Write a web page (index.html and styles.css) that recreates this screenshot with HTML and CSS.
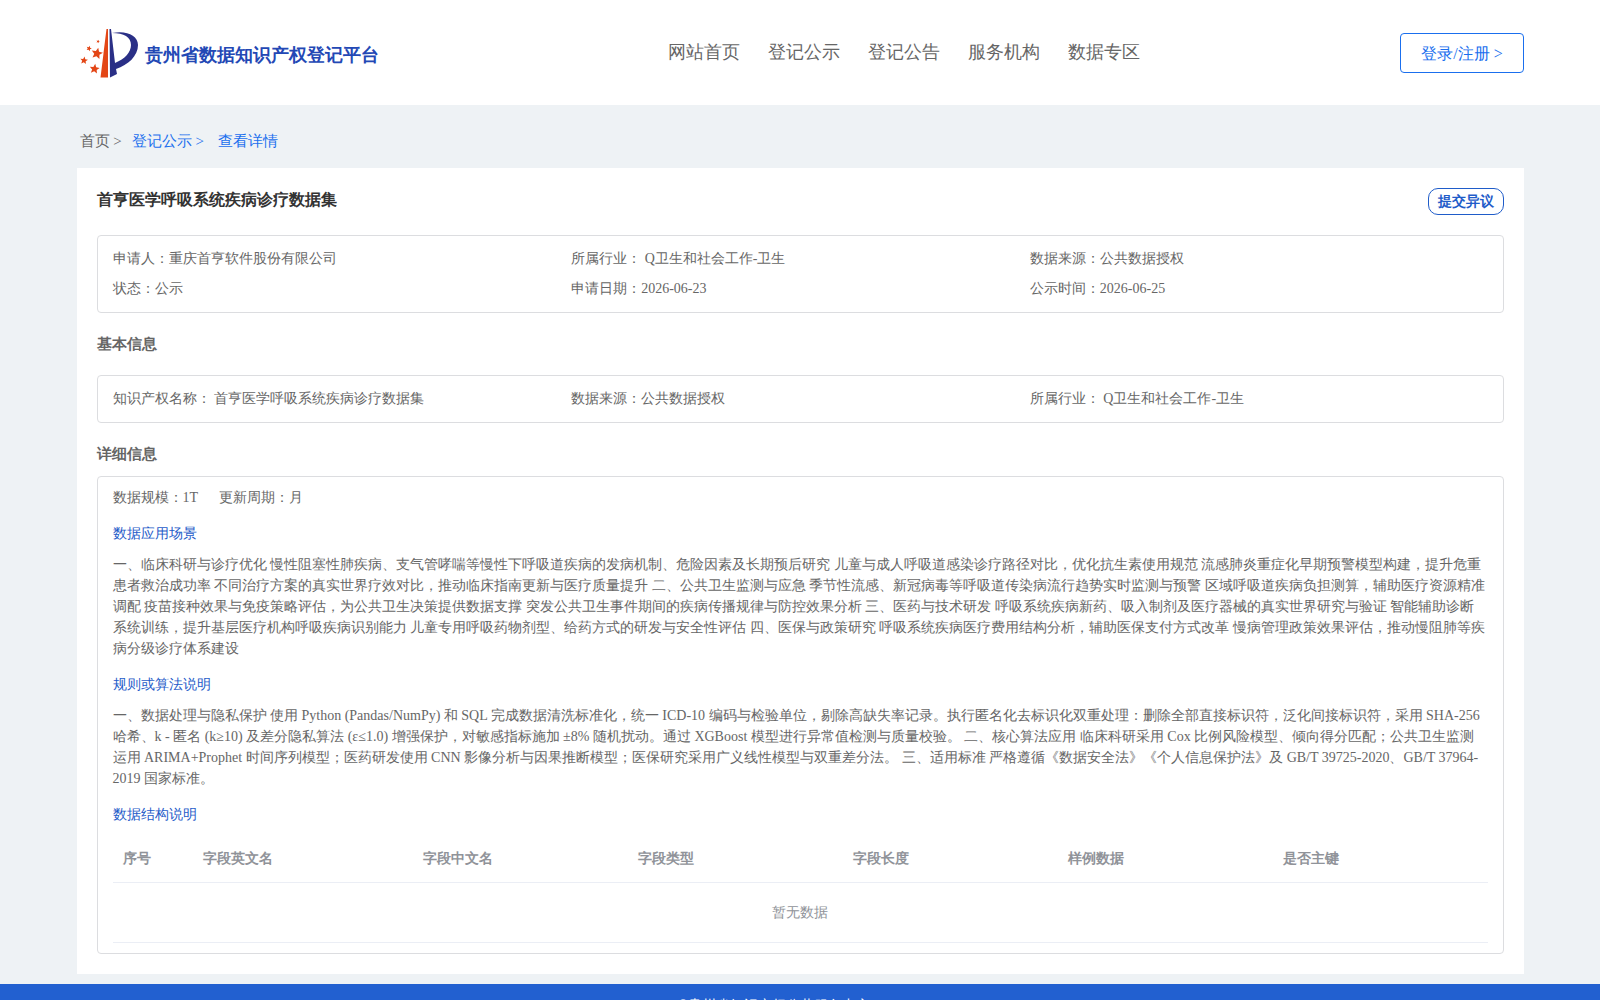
FILE: index.html
```html
<!DOCTYPE html>
<html>
<head>
<meta charset="utf-8">
<title>贵州省数据知识产权登记平台</title>
<link rel="stylesheet" href="styles.css">
</head>
<body>
<header class="header">
  <a class="brand" href="#">
    <svg class="brand-mark" viewBox="0 0 58 50" aria-hidden="true">
      <defs>
        <path id="star" d="M0-10 2.700-3.600 9.500-3.100 4.400 1.400 5.900 8.100 0 4.600-5.900 8.100-4.400 1.400-9.500-3.100-2.700-3.600z"/>
      </defs>
      <path fill="#e34616" d="M26.500 1H28V49.500H20.500z"/>
      <path fill="#2a2f86" d="M29.500 1H31L35 35C45 31 51 24 51 17 51 9 44 5 32 5 46 2 58 7 58 17 58 28 48 37 36 41L37 46 30 49.500z"/>
      <g fill="#e34616">
        <use href="#star" transform="translate(17 25.500) rotate(12) scale(.6)"/>
        <use href="#star" transform="translate(4 32.500) rotate(8) scale(.4)"/>
        <use href="#star" transform="translate(14.500 41) rotate(8) scale(.52)"/>
        <use href="#star" transform="translate(9 20.500) rotate(20) scale(.28)"/>
        <use href="#star" transform="translate(18 13.500) rotate(20) scale(.18)"/>
      </g>
    </svg>
    <span class="brand-name">贵州省数据知识产权登记平台</span>
  </a>
  <nav class="nav">
    <a href="#">网站首页</a>
    <a href="#">登记公示</a>
    <a href="#">登记公告</a>
    <a href="#">服务机构</a>
    <a href="#">数据专区</a>
  </nav>
  <button class="login" type="button">登录/注册 &gt;</button>
</header>

<main class="main">
  <nav class="crumbs">
    <a href="#">首页 &gt;</a>
    <a class="crumb-active" href="#">登记公示 &gt;</a>
    <a class="crumb-active crumb-last" href="#">查看详情</a>
  </nav>

  <article class="card">
    <div class="card-head">
      <h1 class="title">首亨医学呼吸系统疾病诊疗数据集</h1>
      <button class="objection" type="button">提交异议</button>
    </div>

    <div class="panel facts">
      <div>申请人：重庆首亨软件股份有限公司</div>
      <div>所属行业： Q卫生和社会工作-卫生</div>
      <div>数据来源：公共数据授权</div>
      <div>状态：公示</div>
      <div>申请日期：2026-06-23</div>
      <div>公示时间：2026-06-25</div>
    </div>

    <h2 class="section section-basic">基本信息</h2>
    <div class="panel facts">
      <div>知识产权名称： 首亨医学呼吸系统疾病诊疗数据集</div>
      <div>数据来源：公共数据授权</div>
      <div>所属行业： Q卫生和社会工作-卫生</div>
    </div>

    <h2 class="section">详细信息</h2>
    <div class="panel detail">
      <div class="scale"><span>数据规模：1T</span><span>更新周期：月</span></div>
      <h3 class="sub">数据应用场景</h3>
      <p class="text">一、临床科研与诊疗优化 慢性阻塞性肺疾病、支气管哮喘等慢性下呼吸道疾病的发病机制、危险因素及长期预后研究 儿童与成人呼吸道感染诊疗路径对比，优化抗生素使用规范 流感肺炎重症化早期预警模型构建，提升危重患者救治成功率 不同治疗方案的真实世界疗效对比，推动临床指南更新与医疗质量提升 二、公共卫生监测与应急 季节性流感、新冠病毒等呼吸道传染病流行趋势实时监测与预警 区域呼吸道疾病负担测算，辅助医疗资源精准调配 疫苗接种效果与免疫策略评估，为公共卫生决策提供数据支撑 突发公共卫生事件期间的疾病传播规律与防控效果分析 三、医药与技术研发 呼吸系统疾病新药、吸入制剂及医疗器械的真实世界研究与验证 智能辅助诊断系统训练，提升基层医疗机构呼吸疾病识别能力 儿童专用呼吸药物剂型、给药方式的研发与安全性评估 四、医保与政策研究 呼吸系统疾病医疗费用结构分析，辅助医保支付方式改革 慢病管理政策效果评估，推动慢阻肺等疾病分级诊疗体系建设</p>
      <h3 class="sub">规则或算法说明</h3>
      <p class="text">一、数据处理与隐私保护 使用 Python (Pandas/NumPy) 和 SQL 完成数据清洗标准化，统一 ICD-10 编码与检验单位，剔除高缺失率记录。执行匿名化去标识化双重处理：删除全部直接标识符，泛化间接标识符，采用 SHA-256 哈希、k - 匿名 (k≥10) 及差分隐私算法 (ε≤1.0) 增强保护，对敏感指标施加 ±8% 随机扰动。通过 XGBoost 模型进行异常值检测与质量校验。 二、核心算法应用 临床科研采用 Cox 比例风险模型、倾向得分匹配；公共卫生监测运用 ARIMA+Prophet 时间序列模型；医药研发使用 CNN 影像分析与因果推断模型；医保研究采用广义线性模型与双重差分法。 三、适用标准 严格遵循《数据安全法》《个人信息保护法》及 GB/T 39725-2020、GB/T 37964-2019 国家标准。</p>
      <h3 class="sub">数据结构说明</h3>
      <table class="fields">
        <colgroup><col class="col-index"><col class="col-name"><col><col><col><col><col></colgroup>
        <thead>
          <tr><th>序号</th><th>字段英文名</th><th>字段中文名</th><th>字段类型</th><th>字段长度</th><th>样例数据</th><th>是否主键</th></tr>
        </thead>
        <tbody>
          <tr><td class="empty" colspan="7">暂无数据</td></tr>
        </tbody>
      </table>
    </div>
  </article>
</main>

<footer class="footer">©贵州省知识产权公共服务中心</footer>
</body>
</html>
```
FILE: styles.css
```css
* { box-sizing: border-box; }

body {
  margin: 0;
  background: #eef2f5;
  color: #666;
  font-family: "Liberation Serif", serif;
  font-size: 14px;
  line-height: 21px;
}

h1, h2, h3, p { margin: 0; }
a { color: inherit; text-decoration: none; }
button { background: #fff; font-family: inherit; cursor: pointer; }

.header {
  display: grid;
  grid-template-columns: 1fr auto 384px;
  align-items: center;
  height: 105px;
  padding: 0 76px 0 80px;
  background: #fff;
}

.brand { display: flex; align-items: center; gap: 7px; }
.brand-mark { width: 58px; height: 50px; }
.brand-name {
  padding-top: 5px;
  color: #2348b5;
  font-size: 18px;
  font-weight: bold;
}

.nav { display: flex; gap: 28px; font-size: 18px; }

.login {
  justify-self: end;
  width: 124px;
  height: 40px;
  padding: 3px 0 0;
  border: 1px solid #1a6fee;
  border-radius: 4px;
  color: #1a6fee;
  font-size: 16px;
}

.main {
  width: calc(100% - 153px);
  margin: 0 auto;
  padding-bottom: 10px;
}

.crumbs {
  display: flex;
  align-items: center;
  gap: 10px;
  height: 63px;
  padding: 10px 3px 0;
  font-size: 15px;
}
.crumb-active { color: #1a6fee; }
.crumb-last { padding-left: 4px; }

.card { padding: 20px; background: #fff; }
.card-head {
  display: flex;
  justify-content: space-between;
  align-items: flex-start;
  height: 47px;
}
.title { color: #333; font-size: 16px; line-height: 24px; }
.objection {
  width: 76px;
  height: 27px;
  padding: 0;
  border: 1px solid #1f5cc9;
  border-radius: 10px;
  color: #1f5cc9;
  font-size: 14px;
  font-weight: bold;
}

.panel { border: 1px solid #dcdde0; border-radius: 4px; }
.facts {
  display: grid;
  grid-template-columns: repeat(3, 1fr);
  padding: 8px 14px 8px 15px;
  line-height: 30px;
}

.section { padding: 20px 0 11px; font-size: 15px; line-height: 22px; }
.section-basic { padding-bottom: 20px; }

.detail { padding: 10px 15px; }
.scale { display: flex; gap: 21px; }
.sub {
  margin: 15px 0 10px;
  color: #1f5cc9;
  font-size: 14px;
  font-weight: normal;
}

.fields {
  width: 100%;
  table-layout: fixed;
  border-collapse: collapse;
  color: #909399;
}
.col-index { width: 80px; }
.col-name { width: 220px; }
.fields th {
  height: 47px;
  padding: 0 10px;
  border-bottom: 1px solid #ebeef5;
  text-align: left;
}
.fields .empty {
  height: 60px;
  padding: 0;
  border-bottom: 1px solid #ebeef5;
  text-align: center;
}

.footer {
  padding: 11px 52px 40px 0;
  background: #2260d0;
  color: #fff;
  text-align: center;
}
```
